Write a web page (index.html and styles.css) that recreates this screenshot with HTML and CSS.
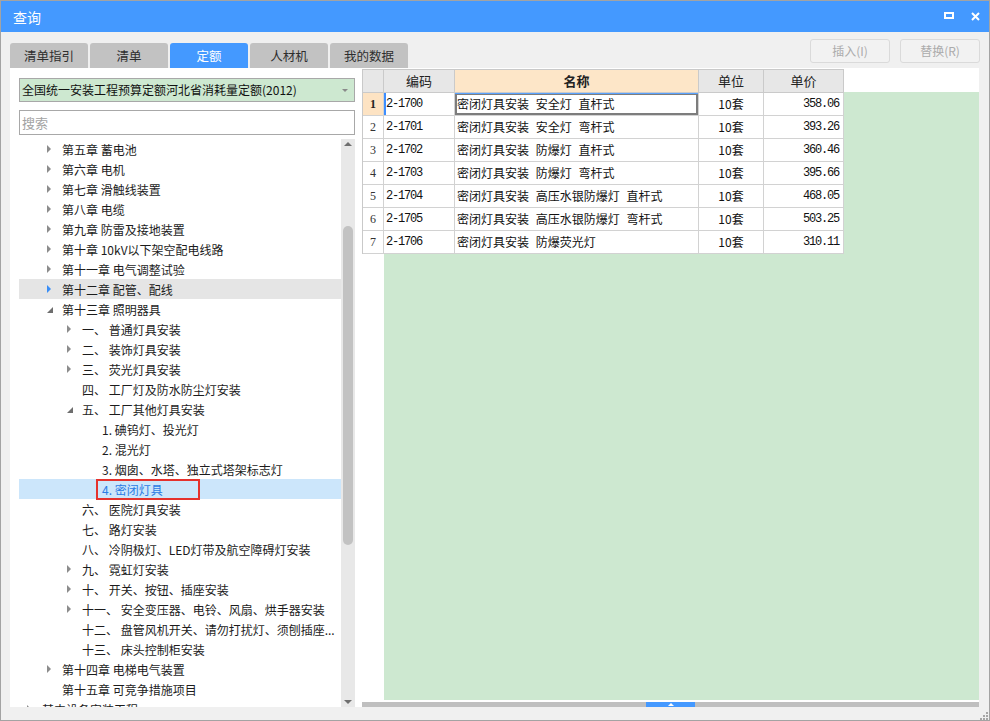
FILE: index.html
```html
<!DOCTYPE html>
<html lang="zh-CN">
<head>
<meta charset="utf-8">
<title>查询</title>
<link rel="stylesheet" href="styles.css">
</head>
<body>
<div class="window">
  <div class="titlebar">
    <span class="title">查询</span>
    <svg class="ico-max" width="10" height="8" viewBox="0 0 10 8"><rect x="1" y="1" width="8" height="5" fill="none" stroke="#fff" stroke-width="2"/></svg>
    <svg class="ico-close" width="9" height="9" viewBox="0 0 9 9"><path d="M1 1L8 8M8 1L1 8" stroke="#fff" stroke-width="2" fill="none"/></svg>
  </div>
  <div class="toolbar">
    <div class="tabs">
      <div class="tab">清单指引</div>
      <div class="tab">清单</div>
      <div class="tab active">定额</div>
      <div class="tab">人材机</div>
      <div class="tab">我的数据</div>
    </div>
    <div class="actions">
      <button class="btn" disabled>插入(I)</button>
      <button class="btn" disabled>替换(R)</button>
    </div>
  </div>
  <div class="main">
    <div class="left">
      <div class="select"><span class="select-text">全国统一安装工程预算定额河北省消耗量定额(2012)</span><span class="caret"></span></div>
      <div class="search">搜索</div>
      <div class="tree-wrap">
        <div class="tree">
          <div class="row l1"><i class="tw c"></i><span class="tx">第五章 蓄电池</span></div>
          <div class="row l1"><i class="tw c"></i><span class="tx">第六章 电机</span></div>
          <div class="row l1"><i class="tw c"></i><span class="tx">第七章 滑触线装置</span></div>
          <div class="row l1"><i class="tw c"></i><span class="tx">第八章 电缆</span></div>
          <div class="row l1"><i class="tw c"></i><span class="tx">第九章 防雷及接地装置</span></div>
          <div class="row l1"><i class="tw c"></i><span class="tx">第十章 10kV以下架空配电线路</span></div>
          <div class="row l1"><i class="tw c"></i><span class="tx">第十一章 电气调整试验</span></div>
          <div class="row l1 hov"><i class="tw c"></i><span class="tx">第十二章 配管、配线</span></div>
          <div class="row l1"><i class="tw e"></i><span class="tx">第十三章 照明器具</span></div>
          <div class="row l2"><i class="tw c"></i><span class="tx">一、 普通灯具安装</span></div>
          <div class="row l2"><i class="tw c"></i><span class="tx">二、 装饰灯具安装</span></div>
          <div class="row l2"><i class="tw c"></i><span class="tx">三、 荧光灯具安装</span></div>
          <div class="row l2"><i class="tw"></i><span class="tx">四、 工厂灯及防水防尘灯安装</span></div>
          <div class="row l2"><i class="tw e"></i><span class="tx">五、 工厂其他灯具安装</span></div>
          <div class="row l3"><i class="tw"></i><span class="tx">1. 碘钨灯、投光灯</span></div>
          <div class="row l3"><i class="tw"></i><span class="tx">2. 混光灯</span></div>
          <div class="row l3"><i class="tw"></i><span class="tx">3. 烟囱、水塔、独立式塔架标志灯</span></div>
          <div class="row l3 sel"><i class="tw"></i><span class="tx mark">4. 密闭灯具</span></div>
          <div class="row l2"><i class="tw"></i><span class="tx">六、 医院灯具安装</span></div>
          <div class="row l2"><i class="tw"></i><span class="tx">七、 路灯安装</span></div>
          <div class="row l2"><i class="tw"></i><span class="tx">八、 冷阴极灯、LED灯带及航空障碍灯安装</span></div>
          <div class="row l2"><i class="tw c"></i><span class="tx">九、 霓虹灯安装</span></div>
          <div class="row l2"><i class="tw c"></i><span class="tx">十、 开关、按钮、插座安装</span></div>
          <div class="row l2"><i class="tw c"></i><span class="tx">十一、 安全变压器、电铃、风扇、烘手器安装</span></div>
          <div class="row l2"><i class="tw"></i><span class="tx">十二、 盘管风机开关、请勿打扰灯、须刨插座...</span></div>
          <div class="row l2"><i class="tw"></i><span class="tx">十三、 床头控制柜安装</span></div>
          <div class="row l1"><i class="tw c"></i><span class="tx">第十四章 电梯电气装置</span></div>
          <div class="row l1"><i class="tw"></i><span class="tx">第十五章 可竞争措施项目</span></div>
          <div class="row l0"><i class="tw c"></i><span class="tx">其中设备安装工程</span></div>
        </div>
        <div class="vscroll">
          <span class="arr-box up"><span class="arr-up"></span></span>
          <span class="vthumb"></span>
          <span class="arr-box down"><span class="arr-down"></span></span>
        </div>
      </div>
    </div>
    <div class="splitter"></div>
    <div class="right">
      <table class="grid">
        <thead>
          <tr><th class="c-no"></th><th class="c-code">编码</th><th class="c-name hl">名称</th><th class="c-unit">单位</th><th class="c-price">单价</th></tr>
        </thead>
        <tbody>
          <tr class="cur"><td class="no">1</td><td class="code">2-1700</td><td class="name focus">密闭灯具安装 安全灯 直杆式</td><td class="unit">10套</td><td class="price">358.06</td></tr>
          <tr><td class="no">2</td><td class="code">2-1701</td><td class="name">密闭灯具安装 安全灯 弯杆式</td><td class="unit">10套</td><td class="price">393.26</td></tr>
          <tr><td class="no">3</td><td class="code">2-1702</td><td class="name">密闭灯具安装 防爆灯 直杆式</td><td class="unit">10套</td><td class="price">360.46</td></tr>
          <tr><td class="no">4</td><td class="code">2-1703</td><td class="name">密闭灯具安装 防爆灯 弯杆式</td><td class="unit">10套</td><td class="price">395.66</td></tr>
          <tr><td class="no">5</td><td class="code">2-1704</td><td class="name">密闭灯具安装 高压水银防爆灯 直杆式</td><td class="unit">10套</td><td class="price">468.05</td></tr>
          <tr><td class="no">6</td><td class="code">2-1705</td><td class="name">密闭灯具安装 高压水银防爆灯 弯杆式</td><td class="unit">10套</td><td class="price">503.25</td></tr>
          <tr><td class="no">7</td><td class="code">2-1706</td><td class="name">密闭灯具安装 防爆荧光灯</td><td class="unit">10套</td><td class="price">310.11</td></tr>
        </tbody>
      </table>
      <div class="fill"></div>
      <div class="hscroll"><span class="hthumb"><span class="hthumb-arrow"></span></span></div>
    </div>
  </div>
  <div class="statusbar">
    <svg class="grip" width="9" height="9" viewBox="0 0 9 9"><g fill="#a6a6a6"><rect x="7" y="1" width="2" height="2"/><rect x="4" y="4" width="2" height="2"/><rect x="7" y="4" width="2" height="2"/><rect x="1" y="7" width="2" height="2"/><rect x="4" y="7" width="2" height="2"/><rect x="7" y="7" width="2" height="2"/></g></svg>
  </div>
</div>
</body>
</html>
```
FILE: styles.css
```css
html, body {
  margin: 0;
  padding: 0;
}
body {
  width: 990px;
  height: 721px;
  overflow: hidden;
  font-family: "Noto Sans CJK SC", "Microsoft YaHei", sans-serif;
  font-size: 12px;
  color: #1c1c1c;
}
.window {
  box-sizing: border-box;
  width: 990px;
  height: 721px;
  border: 1px solid #a3a3a3;
  background: #f0f0f0;
  display: flex;
  flex-direction: column;
}
.titlebar {
  height: 31px;
  flex: none;
  background: #4499ff;
  display: flex;
  align-items: center;
  padding: 0 9px 0 12px;
  color: #fff;
}
.title {
  flex: 1;
  font-size: 14px;
  line-height: 20px;
}
.ico-max {
  display: block;
  margin-top: -1px;
}
.ico-close {
  display: block;
  margin-left: 17px;
  margin-top: -1px;
}
.toolbar {
  height: 36px;
  flex: none;
  display: flex;
  padding: 0 9px 0 9px;
}
.tabs {
  display: flex;
  gap: 2px;
  align-self: flex-end;
}
.tab {
  width: 78px;
  height: 25px;
  line-height: 25px;
  text-align: center;
  background: #c2c2c2;
  border-radius: 3px 3px 0 0;
  color: #2e2e2e;
  font-size: 12.5px;
}
.tab.active {
  background: #4499ff;
  color: #fff;
}
.actions {
  margin-left: auto;
  margin-top: 7px;
  align-self: flex-start;
  display: flex;
  gap: 10px;
}
.btn {
  width: 80px;
  height: 24px;
  box-sizing: border-box;
  border: 1px solid #dadada;
  border-radius: 3px;
  background: #f2f2f2;
  color: #ababab;
  font-family: "Noto Sans CJK SC", sans-serif;
  font-size: 12px;
  padding: 0;
  line-height: 22px;
}
.main {
  height: 639px;
  flex: none;
  margin: 0 10px 0 9px;
  background: #fff;
  display: flex;
}
.left {
  width: 346px;
  flex: none;
  box-sizing: border-box;
  padding: 10px 1px 0 9px;
  display: flex;
  flex-direction: column;
}
.select {
  height: 24px;
  flex: none;
  box-sizing: border-box;
  border: 1px solid #a8a8a8;
  background: #cde8d0;
  display: flex;
  align-items: center;
  padding: 0 6px 0 2px;
  color: #111;
}
.select-text {
  line-height: 20px;
}
.caret {
  margin-left: auto;
  width: 0;
  height: 0;
  border-left: 3px solid transparent;
  border-right: 3px solid transparent;
  border-top: 3px solid #8a8a8a;
}
.search {
  height: 25px;
  flex: none;
  margin-top: 8px;
  box-sizing: border-box;
  border: 1px solid #a8a8a8;
  color: #a3a3a3;
  padding-left: 2px;
  font-size: 13px;
  line-height: 23px;
}
.tree-wrap {
  margin-top: 4px;
  flex: 1;
  min-height: 0;
  display: flex;
}
.tree {
  flex: 1;
  min-width: 0;
  overflow: hidden;
}
.row {
  height: 20px;
  display: flex;
  align-items: center;
  white-space: nowrap;
  box-sizing: border-box;
}
.l0 { padding-left: 0; }
.l1 { padding-left: 20px; }
.l2 { padding-left: 40px; }
.l3 { padding-left: 60px; }
.tw {
  width: 23px;
  flex: none;
  height: 20px;
  display: flex;
  align-items: center;
}
.tw::before {
  content: "";
  display: block;
  width: 0;
  height: 0;
}
.tw.c::before {
  margin-left: 8px;
  border-left: 4px solid #8c8c8c;
  border-top: 4px solid transparent;
  border-bottom: 4px solid transparent;
}
.tw.e::before {
  margin-left: 8px;
  margin-top: 1px;
  border-right: 6px solid #6e6e6e;
  border-top: 6px solid transparent;
}
.tx {
  line-height: 17px;
  color: #1c1c1c;
}
.row.hov {
  background: #e5e5e5;
}
.row.hov .tw.c::before {
  border-left-color: #3a8ef6;
}
.row.sel {
  background: #cce6fb;
}
.tx.mark {
  border: 2px solid #e5322d;
  padding: 0 4px;
  margin-left: -6px;
  width: 104px;
  box-sizing: border-box;
  color: #2b7be4;
  height: 21px;
  line-height: 17px;
}
.vscroll {
  width: 14px;
  flex: none;
  background: #e8e8e8;
  display: flex;
  flex-direction: column;
  align-items: center;
}
.arr-box {
  display: flex;
  align-items: center;
  justify-content: center;
  width: 14px;
}
.arr-box.up {
  height: 10px;
}
.arr-box.down {
  height: 11px;
  margin-top: auto;
}
.arr-up {
  border-left: 4px solid transparent;
  border-right: 4px solid transparent;
  border-bottom: 4px solid #6f6f6f;
}
.arr-down {
  border-left: 4px solid transparent;
  border-right: 4px solid transparent;
  border-top: 4px solid #6f6f6f;
}
.vthumb {
  margin-top: 77px;
  width: 10px;
  height: 319px;
  border-radius: 5px;
  background: #c2c2c2;
}
.splitter {
  width: 6px;
  flex: none;
}
.right {
  flex: 1;
  min-width: 0;
  box-sizing: border-box;
  padding-top: 1px;
  display: flex;
  flex-direction: column;
  background: #fff linear-gradient(#cde8d0, #cde8d0) no-repeat 22px 24px / calc(100% - 22px) 608px;
}
.grid {
  border-collapse: separate;
  border-spacing: 0;
  table-layout: fixed;
  width: 482px;
  border-top: 1px solid #c9c9c9;
  border-left: 1px solid #c9c9c9;
  flex: none;
}
.grid th, .grid td {
  box-sizing: border-box;
  padding: 0;
  height: 23px;
  line-height: 22px;
  border-right: 1px solid #d2d2d2;
  border-bottom: 1px solid #d2d2d2;
  white-space: nowrap;
  overflow: hidden;
  background: #fff;
}
.grid th {
  background: #e7e7e7;
  font-weight: normal;
  font-size: 13px;
  color: #222;
  text-align: center;
  border-right-color: #cacaca;
  border-bottom-color: #cacaca;
}
.grid th.hl {
  background: #fde6c8;
  font-weight: bold;
}
.c-no { width: 21px; }
.c-code { width: 71px; }
.c-name { width: 244px; }
.c-unit { width: 65px; }
.c-price { width: 80px; }
.grid td.no {
  text-align: center;
  font-family: "Liberation Serif", serif;
  font-size: 12px;
  color: #333;
}
.grid tr.cur td.no {
  background: #fde3c3;
  font-weight: bold;
  color: #222;
}
.grid td.code, .grid td.price {
  font-family: "Liberation Mono", monospace;
  font-size: 12px;
  letter-spacing: -1.2px;
  color: #111;
}
.grid td.code {
  padding-left: 2px;
}
.grid tr.cur td.code {
  box-shadow: inset 2px 0 0 #3d8eff;
}
.grid td.price {
  text-align: right;
  padding-right: 4px;
}
.grid td.name {
  padding-left: 2px;
  font-size: 12px;
  word-spacing: 4px;
  color: #111;
}
.grid td.name.focus {
  box-shadow: inset 0 1px 0 #5aa3ff, inset 0 0 0 2px #7d7d7d;
}
.grid td.unit {
  text-align: center;
  color: #111;
}
.fill {
  flex: 1;
}
.hscroll {
  height: 5px;
  flex: none;
  background: #bfbfbf;
  display: flex;
}
.hthumb {
  margin-left: 284px;
  width: 49px;
  height: 5px;
  background: #4499ff;
  display: flex;
  align-items: center;
  justify-content: center;
}
.hthumb-arrow {
  border-left: 3px solid transparent;
  border-right: 3px solid transparent;
  border-bottom: 3px solid #fff;
}
.statusbar {
  flex: 1;
  display: flex;
  justify-content: flex-end;
  align-items: flex-end;
  padding: 0 1px 0 0;
}
.grip {
  display: block;
}
```
